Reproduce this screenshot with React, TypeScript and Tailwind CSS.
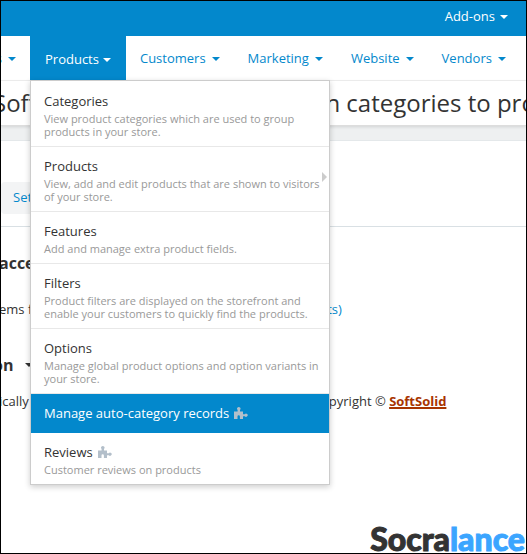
import type { ReactNode } from "react";

type MenuEntry = {
  title: string;
  text?: string;
  addon?: boolean;
  active?: boolean;
  submenu?: boolean;
};

const NAV = ["Customers", "Marketing", "Website", "Vendors"];

const MENU: MenuEntry[] = [
  { title: "Categories", text: "View product categories which are used to group products in your store." },
  { title: "Products", text: "View, add and edit products that are shown to visitors of your store.", submenu: true },
  { title: "Features", text: "Add and manage extra product fields." },
  { title: "Filters", text: "Product filters are displayed on the storefront and enable your customers to quickly find the products." },
  { title: "Options", text: "Manage global product options and option variants in your store." },
  { title: "Manage auto-category records", addon: true, active: true },
  { title: "Reviews", text: "Customer reviews on products", addon: true },
];

function Caret() {
  return (
    <svg viewBox="0 0 8 4" className="h-1 w-2 shrink-0 fill-current" aria-hidden="true">
      <path d="M0 0h8L4 4z" />
    </svg>
  );
}

function Puzzle() {
  return (
    <svg viewBox="0 0 14 13" className="h-[13px] w-3.5 shrink-0 fill-[#b3bfca]" aria-hidden="true">
      <path d="M0 4.6h3.6V3A1.7 1.7 0 1 1 6 3v1.6h3v2.6h1.8a1.6 1.6 0 1 1 0 2H9V12H5.9V9.4a1.2 1.2 0 0 0-2.4 0V12H0z" />
    </svg>
  );
}

function NavButton({ children, active }: { children: ReactNode; active?: boolean }) {
  return (
    <button
      className={
        active
          ? "flex h-full items-center gap-1 bg-[#0388cc] px-[15px] pt-0.5 text-white"
          : "flex h-full items-center gap-1.5 px-3.5 pt-0.5 text-[#0388cc]"
      }
    >
      {children}
      <Caret />
    </button>
  );
}

function ProductsMenu() {
  return (
    <ul className="absolute top-full left-0 z-10 -mt-px w-[300px] border border-[#ccc] bg-white pt-px shadow-[0_2px_6px_rgba(0,0,0,0.2)]">
      {MENU.map((m) => (
        <li key={m.title} className={m.active ? "border-b border-[#0388cc] bg-[#0388cc]" : "border-b border-[#e8e8e8] last:border-b-0"}>
          <a href="#" className="relative block py-2 pr-1 pl-[13px]">
            <span className={m.active ? "flex items-center gap-[5px] leading-[22px] text-white" : "flex items-center gap-[5px] leading-[22px] text-[#333]"}>
              {m.title}
              {m.addon && <Puzzle />}
            </span>
            {m.text && <span className="block text-[11px] leading-[13px] text-[#999]">{m.text}</span>}
            {m.submenu && (
              <svg viewBox="0 0 5 10" className="absolute top-[25px] right-0.5 h-2.5 w-[5px] fill-[#ccc]" aria-hidden="true">
                <path d="M0 0l5 5-5 5z" />
              </svg>
            )}
          </a>
        </li>
      ))}
    </ul>
  );
}

export default function App() {
  return (
    <div className="relative flex min-h-screen flex-col overflow-hidden border border-black bg-white font-['Open_Sans','Noto_Sans',sans-serif] text-[13px] text-[#333]">
      <header>
        <div className="flex h-[35px] items-center justify-end bg-[#0388cc] pr-[18px] pb-1">
          <button className="flex items-center gap-[5px] text-white">
            Add-ons
            <Caret />
          </button>
        </div>
        <nav className="flex h-[45px] border-b border-[#f0f0f0]">
          <div className="flex w-[29px] shrink-0 justify-end">
            <NavButton>Orders</NavButton>
          </div>
          <div className="relative h-[45px] shrink-0">
            <NavButton active>Products</NavButton>
            <ProductsMenu />
          </div>
          {NAV.map((n) => (
            <NavButton key={n}>{n}</NavButton>
          ))}
        </nav>
      </header>

      <div className="relative flex h-[45px] items-center border-b border-[#ddd] shadow-[0_1px_3px_rgba(0,0,0,0.12)]">
        <h1 className="-ml-2 text-2xl whitespace-nowrap">SoftSolid - Automatically assign categories to products</h1>
      </div>
      <div className="h-3.5 bg-[#eef0f1]" />

      <main className="flex-1 border-t border-[#e4e8ea]">
        <div className="flex h-[86px] items-end border-b border-[#d9e0e4] pb-3">
          <button className="h-8 rounded-sm bg-[#f3f4f5] px-3 text-[#0388cc]">Settings</button>
        </div>
        <section className="pt-6">
          <h2 className="-ml-0.5 text-base leading-6 font-bold">access</h2>
          <div className="mt-6 flex leading-5">
            <span className="-ml-0.5 w-[322px] shrink-0">ems for products</span>
            <a href="#" className="text-[#0388cc]">cts)</a>
          </div>
        </section>
        <section className="pt-[34px]">
          <h2 className="-ml-2 flex items-center gap-3 text-base leading-6 font-bold">
            on
            <Caret />
          </h2>
          <div className="mt-3.5 flex leading-5 whitespace-nowrap">
            <span className="-ml-0.5 w-[322px] shrink-0">ically assigns the categories</span>
            <span>
              opyright © <a href="#" className="font-bold text-[#a83400] underline decoration-2">SoftSolid</a>
            </span>
          </div>
        </section>
      </main>

      <div className="absolute -right-px -bottom-px bg-white px-0.5 font-[Lato,sans-serif] text-[32px] leading-[30px] font-black text-[#333] [-webkit-text-stroke:1px]">
        Socra<span className="text-[#3ba5ff]">lance</span>
      </div>
    </div>
  );
}
